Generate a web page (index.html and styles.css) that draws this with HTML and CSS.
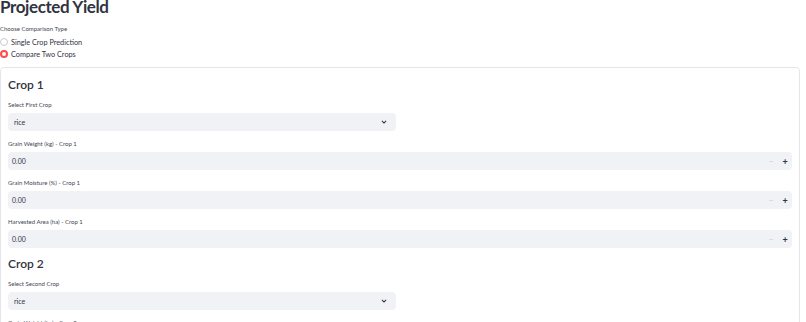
FILE: index.html
```html
<!DOCTYPE html>
<html>
  <head>
    <meta charset="utf-8" />
    <title>Projected Yield</title>
    <link rel="stylesheet" href="styles.css">
  </head>
  <body>
    <main class="app">
      <h1 class="title">Projected Yield</h1>

      <div class="radio-group">
        <div class="widget-label">Choose Comparison Type</div>
        <label class="radio"><span class="radio-dot"></span>Single Crop Prediction</label>
        <label class="radio checked"><span class="radio-dot"></span>Compare Two Crops</label>
      </div>

      <section class="card">
        <h2 class="crop-heading">Crop 1</h2>

        <div class="field">
          <div class="widget-label">Select First Crop</div>
          <div class="select">
            <span>rice</span>
            <svg class="chevron" viewBox="0 0 10 10" width="6" height="6"><path d="M1.5 3.2 L5 6.7 L8.5 3.2" fill="none" stroke="#31333f" stroke-width="1.8"/></svg>
          </div>
        </div>

        <div class="field">
          <div class="widget-label">Grain Weight (kg) - Crop 1</div>
          <div class="number-input">
            <span class="value">0.00</span>
            <span class="step minus">&minus;</span>
            <span class="step plus">+</span>
          </div>
        </div>

        <div class="field">
          <div class="widget-label">Grain Moisture (%) - Crop 1</div>
          <div class="number-input">
            <span class="value">0.00</span>
            <span class="step minus">&minus;</span>
            <span class="step plus">+</span>
          </div>
        </div>

        <div class="field">
          <div class="widget-label">Harvested Area (ha) - Crop 1</div>
          <div class="number-input">
            <span class="value">0.00</span>
            <span class="step minus">&minus;</span>
            <span class="step plus">+</span>
          </div>
        </div>

        <h2 class="crop-heading">Crop 2</h2>

        <div class="field">
          <div class="widget-label">Select Second Crop</div>
          <div class="select">
            <span>rice</span>
            <svg class="chevron" viewBox="0 0 10 10" width="6" height="6"><path d="M1.5 3.2 L5 6.7 L8.5 3.2" fill="none" stroke="#31333f" stroke-width="1.8"/></svg>
          </div>
        </div>

        <div class="field">
          <div class="widget-label">Grain Weight (kg) - Crop 2</div>
          <div class="number-input">
            <span class="value">0.00</span>
            <span class="step minus">&minus;</span>
            <span class="step plus">+</span>
          </div>
        </div>
      </section>
    </main>
  </body>
</html>
```

FILE: styles.css
```css
body {
  margin: 0;
  background: #ffffff;
  color: #31333f;
  font-family: Lato, "Liberation Sans", sans-serif;
  overflow: hidden;
}
.app {
  padding: 0 6px 0 0;
}
.title {
  margin: -5px 0 0 0;
  font-size: 17px;
  line-height: 24px;
  font-weight: 700;
  letter-spacing: -0.4px;
}
.widget-label {
  font-size: 6px;
  line-height: 10px;
  color: #43454f;
}
.radio-group {
  margin-top: 5px;
  margin-bottom: 7px;
}
.radio-group .widget-label {
  margin-bottom: 2px;
}
.radio {
  display: flex;
  align-items: center;
  height: 12px;
  font-size: 7.3px;
  color: #31333f;
}
.radio-dot {
  box-sizing: border-box;
  width: 8px;
  height: 8px;
  border-radius: 50%;
  border: 1px solid #c9cad0;
  margin-right: 3px;
  background: #ffffff;
}
.radio.checked .radio-dot {
  border: 2.5px solid #ff4b4b;
  background: #ffffff;
}
.card {
  border: 1px solid #e6e6ea;
  border-radius: 4px;
  padding: 6px 7px 0 7px;
  height: 300px;
}
.crop-heading {
  margin: 3px 0 7px 0;
  font-size: 12px;
  line-height: 16px;
  font-weight: 600;
}
.field {
  margin-bottom: 8px;
}
.field .widget-label {
  margin-bottom: 3px;
}
.select,
.number-input {
  display: flex;
  align-items: center;
  height: 18px;
  background: #f0f2f6;
  border-radius: 4px;
  font-size: 7px;
}
.select {
  width: calc(50% - 4px);
  padding: 0 6px;
  box-sizing: border-box;
  justify-content: space-between;
}
.chevron {
  margin-right: 3px;
}
.number-input {
  padding-left: 4px;
}
.number-input .value {
  flex: 1;
}
.step {
  width: 14px;
  text-align: center;
  font-size: 9px;
  font-weight: 700;
}
.step.minus {
  color: #d3d4d8;
  font-weight: 400;
}
.step.plus {
  color: #31333f;
}
```
